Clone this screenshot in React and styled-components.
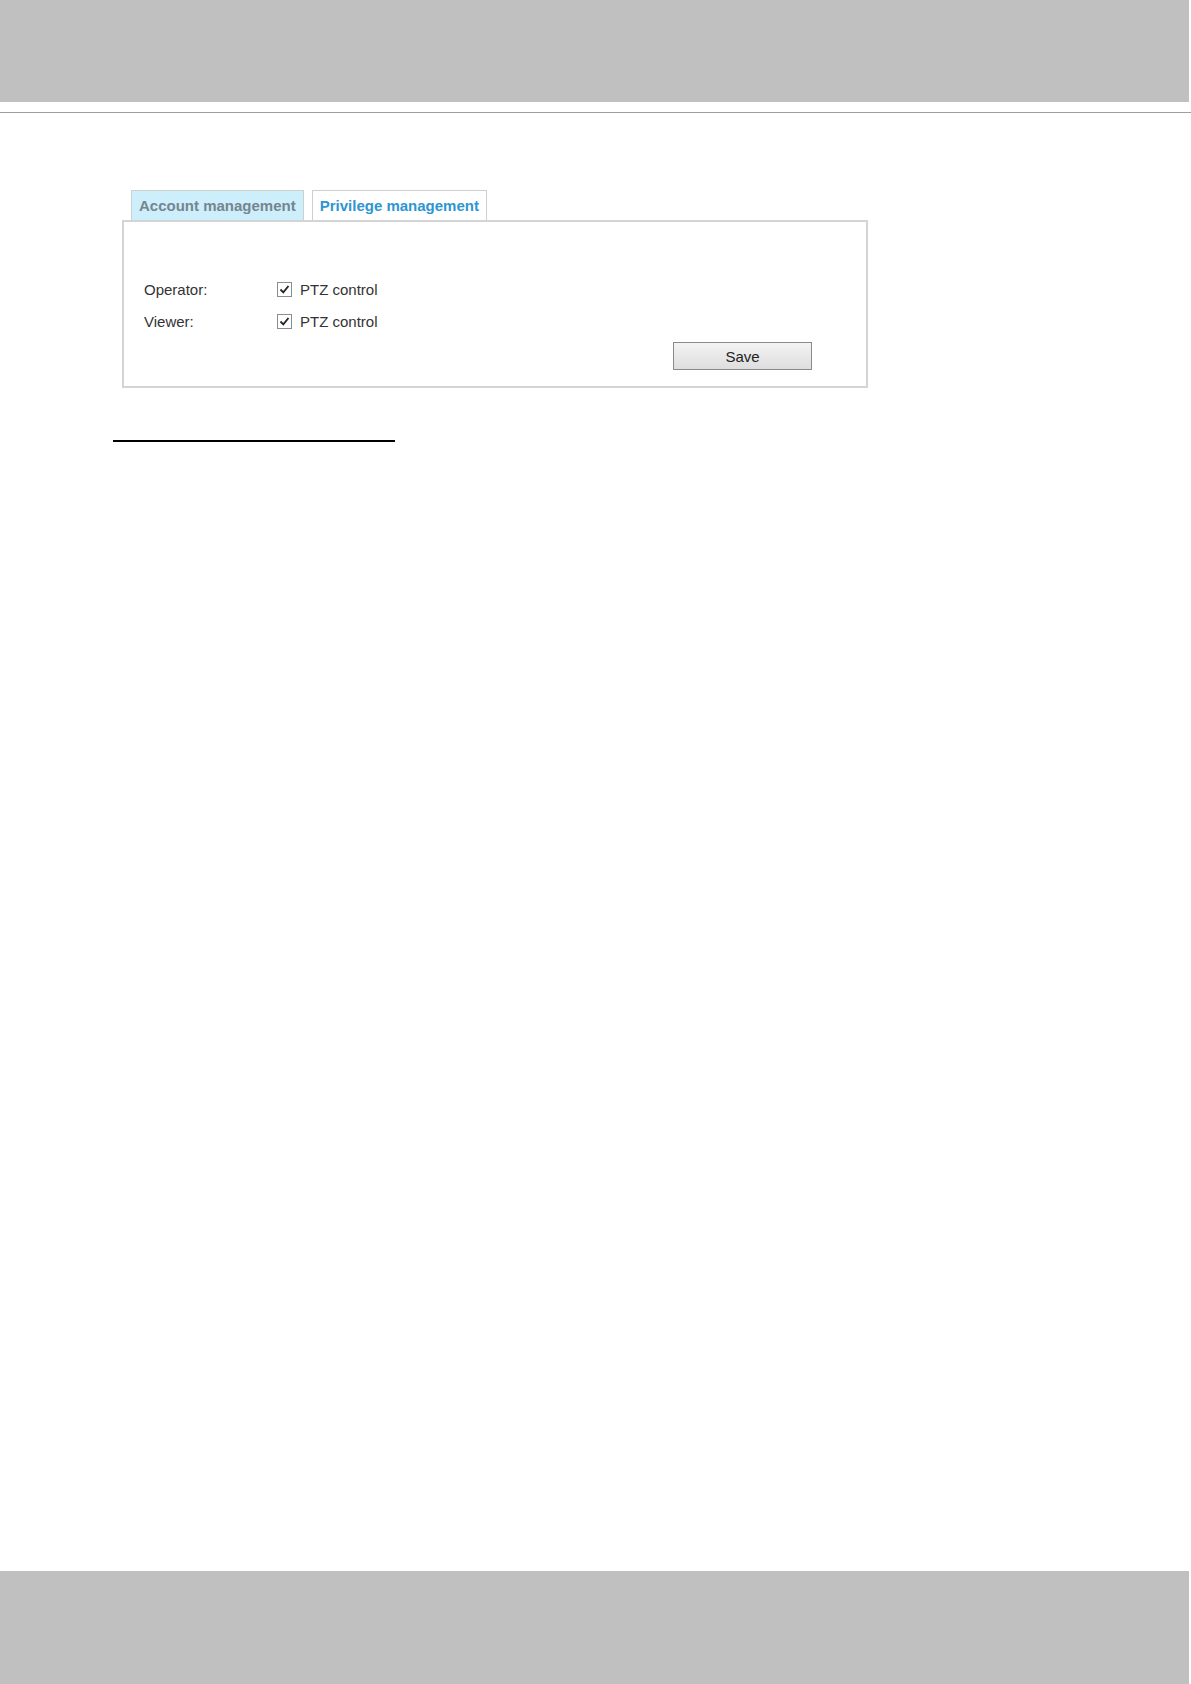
import React, { useState } from 'react';
import styled, { createGlobalStyle } from 'styled-components';

const GlobalStyle = createGlobalStyle`
  html, body {
    margin: 0;
    padding: 0;
    background: #fff;
  }
  body {
    font-family: "Liberation Sans", Arial, sans-serif;
  }
`;

const Page = styled.div`
  min-height: 1684px;
  display: flex;
  flex-direction: column;
`;

const Band = styled.div`
  height: ${(p) => p.$height}px;
  margin-right: 2px;
  background: #c0c0c0;
`;

const HeaderRule = styled.div`
  height: 1px;
  margin-top: 10px;
  background: #9e9e9e;
`;

const Content = styled.main`
  padding: 77px 0 0 122px;
  display: flex;
  flex-direction: column;
  align-items: flex-start;
`;

const TabBar = styled.div`
  display: flex;
  gap: 8px;
  margin-left: 9px;
`;

const Tab = styled.button`
  height: 30px;
  padding: 0 7px;
  border: 1px solid #cfcfcf;
  border-bottom: none;
  background: ${(p) => (p.$active ? '#fff' : '#cdeefb')};
  color: ${(p) => (p.$active ? '#2e95d3' : '#75858f')};
  font-family: "Liberation Sans", Arial, sans-serif;
  font-size: 15px;
  font-weight: bold;
  line-height: 28px;
  cursor: pointer;
`;

const Panel = styled.section`
  box-sizing: border-box;
  width: 746px;
  height: 168px;
  border: 2px solid #d4d4d4;
  padding: 51px 54px 14px 20px;
  display: flex;
  flex-direction: column;
`;

const Row = styled.div`
  display: flex;
  align-items: center;
  height: 32px;
  font-size: 15px;
  color: #333;
`;

const Label = styled.span`
  width: 133px;
`;

const CheckLabel = styled.label`
  display: flex;
  align-items: center;
  gap: 8px;
  cursor: pointer;
`;

const Box = styled.span`
  box-sizing: border-box;
  width: 15px;
  height: 15px;
  border: 1px solid #8c8c8c;
  background: #fff;
  display: flex;
  align-items: center;
  justify-content: center;
`;

const Actions = styled.div`
  display: flex;
  justify-content: flex-end;
  margin-top: 5px;
`;

const SaveButton = styled.button`
  width: 139px;
  height: 28px;
  border: 1px solid #8a8a8a;
  background: linear-gradient(#f3f3f3, #dedede);
  font-family: "Liberation Sans", Arial, sans-serif;
  font-size: 15px;
  color: #222;
  cursor: pointer;
`;

const Underline = styled.div`
  width: 282px;
  height: 2px;
  margin: 52px 0 0 -9px;
  background: #000;
`;

const Footer = styled(Band)`
  margin-top: auto;
`;

function Checkbox({ checked, onChange, children }) {
  return (
    <CheckLabel onClick={onChange}>
      <Box>
        {checked && (
          <svg width="11" height="11" viewBox="0 0 11 11">
            <path d="M1.5 5.5 L4.3 8.3 L9.5 2" fill="none" stroke="#222" strokeWidth="1.8" />
          </svg>
        )}
      </Box>
      {children}
    </CheckLabel>
  );
}

export default function App() {
  const [tab, setTab] = useState('privilege');
  const [perms, setPerms] = useState({ operator: true, viewer: true });

  function toggle(name) {
    setPerms({ ...perms, [name]: !perms[name] });
  }

  return (
    <Page>
      <GlobalStyle />
      <Band $height={102} />
      <HeaderRule />
      <Content>
        <TabBar>
          <Tab $active={tab === 'account'} onClick={() => setTab('account')}>
            Account management
          </Tab>
          <Tab $active={tab === 'privilege'} onClick={() => setTab('privilege')}>
            Privilege management
          </Tab>
        </TabBar>
        <Panel>
          <Row>
            <Label>Operator:</Label>
            <Checkbox checked={perms.operator} onChange={() => toggle('operator')}>
              PTZ control
            </Checkbox>
          </Row>
          <Row>
            <Label>Viewer:</Label>
            <Checkbox checked={perms.viewer} onChange={() => toggle('viewer')}>
              PTZ control
            </Checkbox>
          </Row>
          <Actions>
            <SaveButton>Save</SaveButton>
          </Actions>
        </Panel>
        <Underline />
      </Content>
      <Footer $height={113} />
    </Page>
  );
}
